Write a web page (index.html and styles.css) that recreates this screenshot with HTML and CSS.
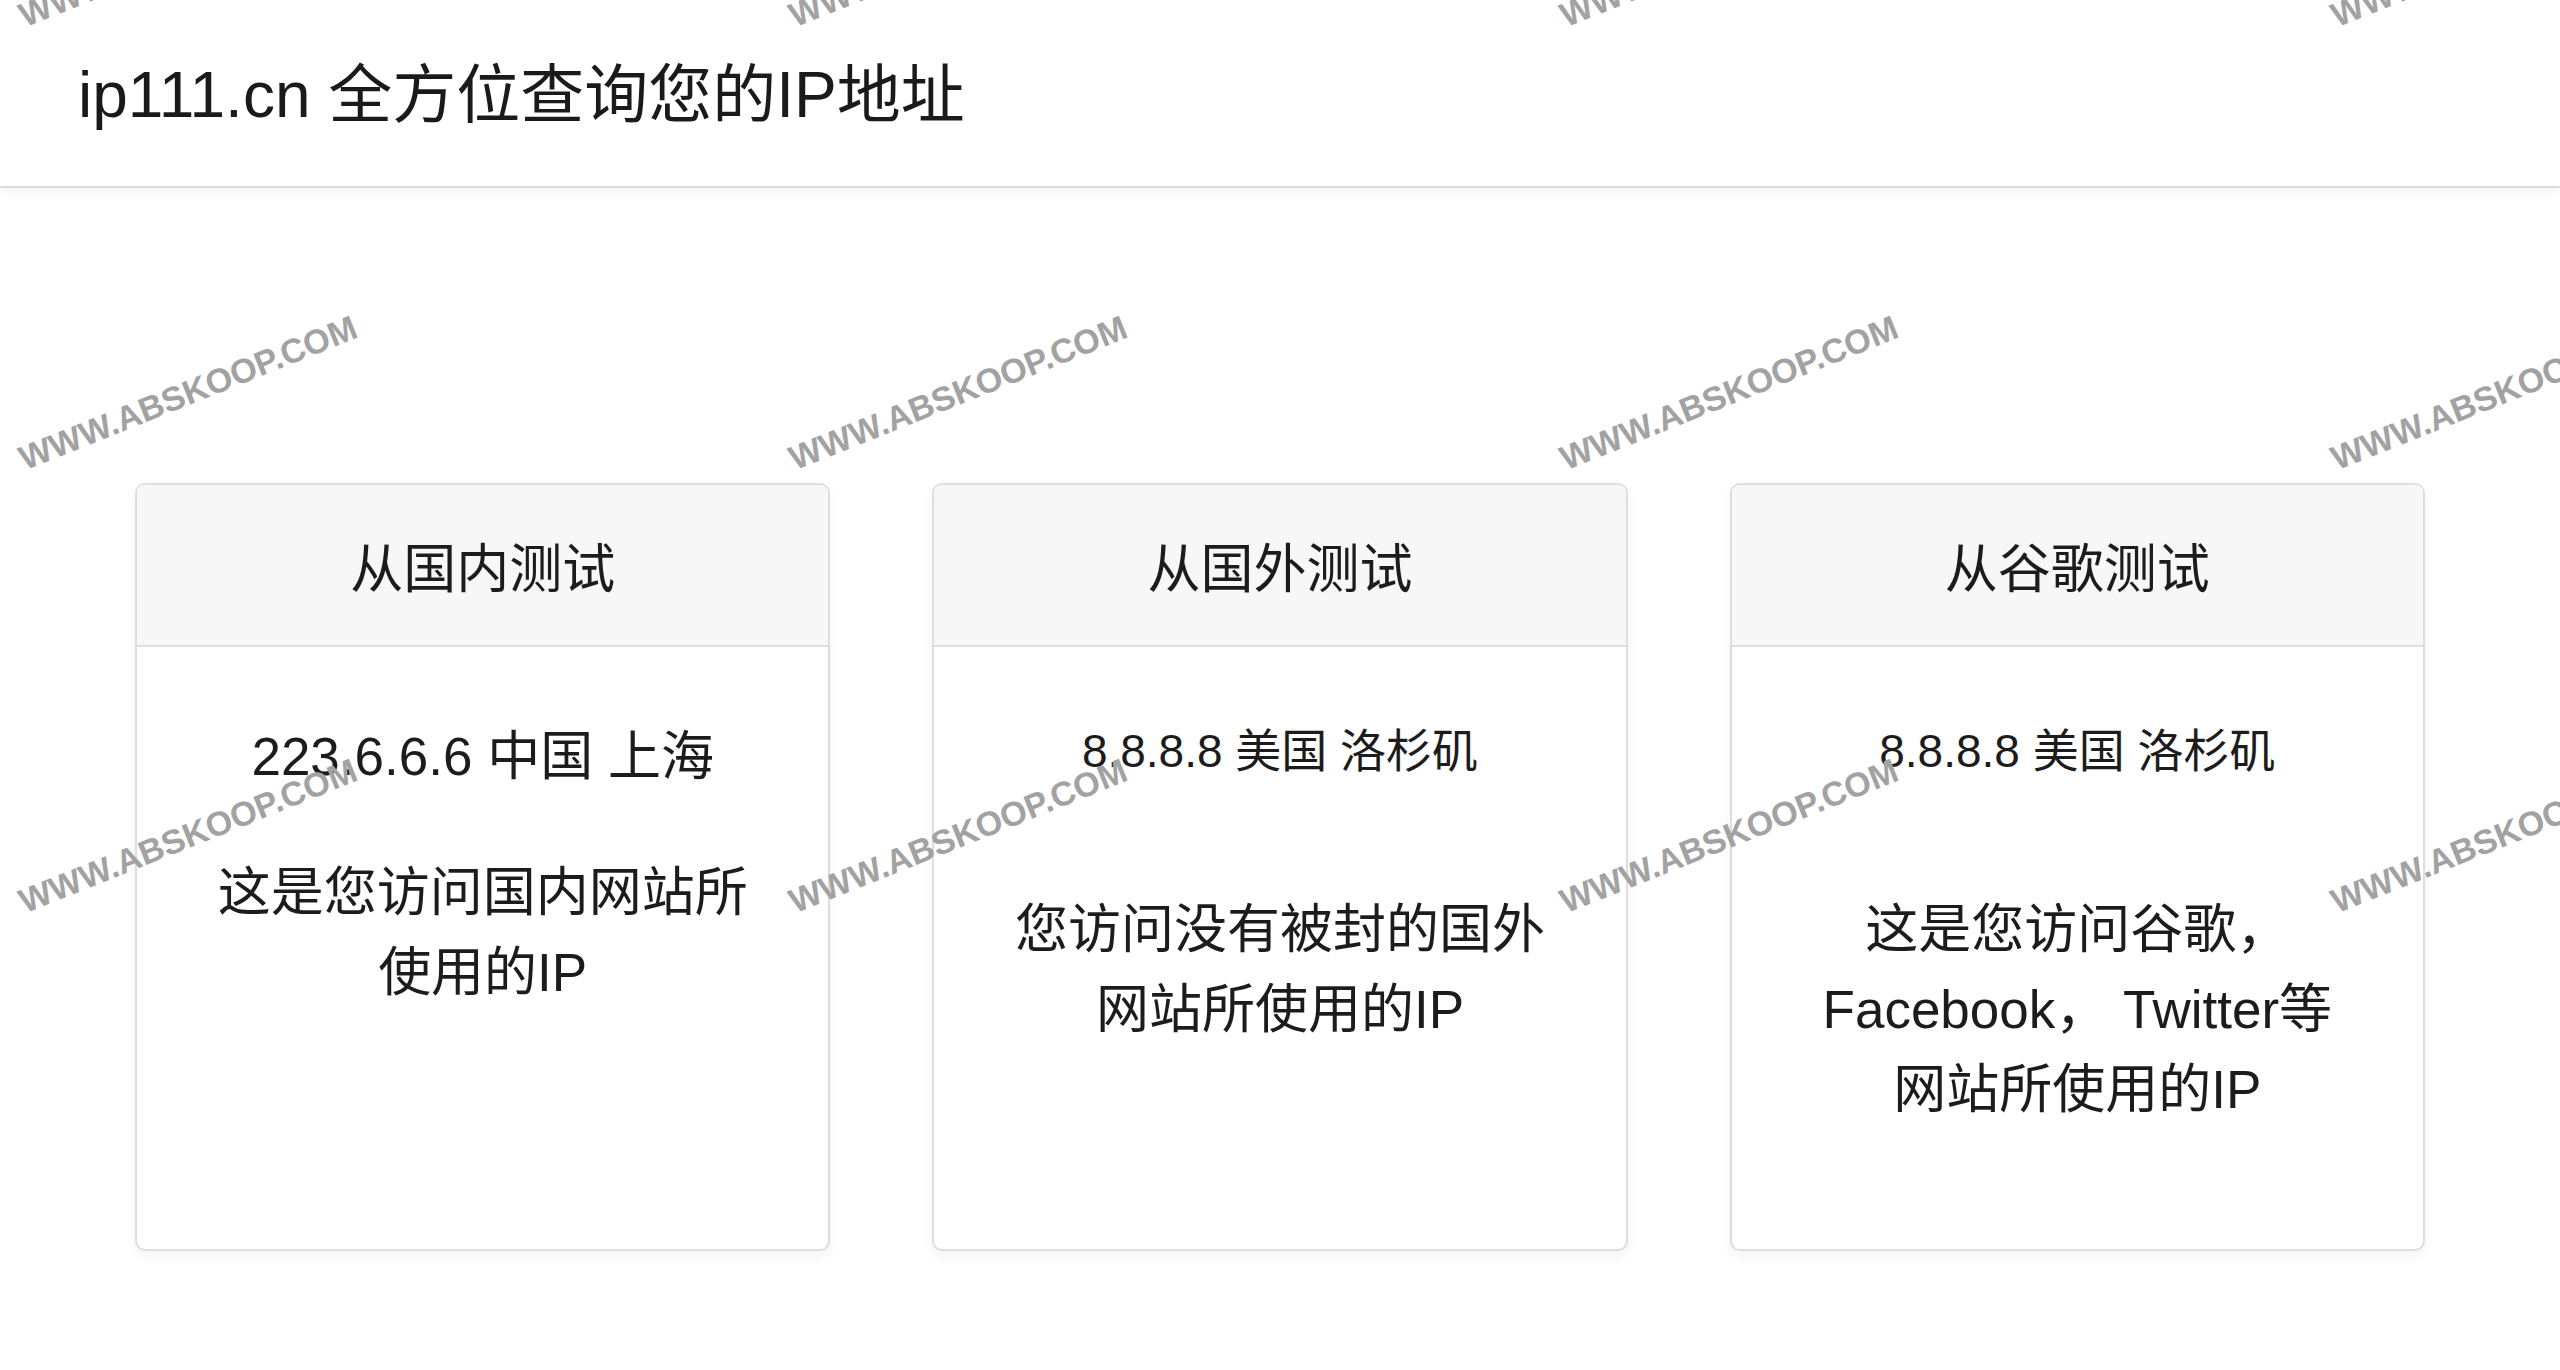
FILE: index.html
```html
<!DOCTYPE html>
<html lang="zh-CN">
<head>
<meta charset="utf-8">
<title>ip111.cn 全方位查询您的IP地址</title>
<link rel="stylesheet" href="styles.css">
</head>
<body>
<header class="topbar">
  <h1 class="site-title">ip111.cn 全方位查询您的IP地址</h1>
</header>
<main class="cards">
  <section class="card">
    <div class="card-header">从国内测试</div>
    <div class="card-body">
      <p class="ip">223.6.6.6 中国 上海</p>
      <p class="desc">这是您访问国内网站所<br>使用的IP</p>
    </div>
  </section>
  <section class="card">
    <div class="card-header">从国外测试</div>
    <div class="card-body">
      <p class="ip ip-small">8.8.8.8 美国 洛杉矶</p>
      <p class="desc desc-far">您访问没有被封的国外<br>网站所使用的IP</p>
    </div>
  </section>
  <section class="card">
    <div class="card-header">从谷歌测试</div>
    <div class="card-body">
      <p class="ip ip-small">8.8.8.8 美国 洛杉矶</p>
      <p class="desc desc-far">这是您访问谷歌，<br>Facebook，&nbsp;Twitter等<br>网站所使用的IP</p>
    </div>
  </section>
</main>
<div class="watermarks" aria-hidden="true">
  <span class="wm" style="left:188px;top:-50px">WWW.ABSKOOP.COM</span>
  <span class="wm" style="left:958px;top:-50px">WWW.ABSKOOP.COM</span>
  <span class="wm" style="left:1729px;top:-50px">WWW.ABSKOOP.COM</span>
  <span class="wm" style="left:2500px;top:-50px">WWW.ABSKOOP.COM</span>
  <span class="wm" style="left:188px;top:393px">WWW.ABSKOOP.COM</span>
  <span class="wm" style="left:958px;top:393px">WWW.ABSKOOP.COM</span>
  <span class="wm" style="left:1729px;top:393px">WWW.ABSKOOP.COM</span>
  <span class="wm" style="left:2500px;top:393px">WWW.ABSKOOP.COM</span>
  <span class="wm" style="left:188px;top:836px">WWW.ABSKOOP.COM</span>
  <span class="wm" style="left:958px;top:836px">WWW.ABSKOOP.COM</span>
  <span class="wm" style="left:1729px;top:836px">WWW.ABSKOOP.COM</span>
  <span class="wm" style="left:2500px;top:836px">WWW.ABSKOOP.COM</span>
</div>
</body>
</html>
```
FILE: styles.css
```css
html, body {
  margin: 0;
  padding: 0;
  width: 2560px;
  height: 1370px;
  overflow: hidden;
  background: #ffffff;
}

body {
  position: relative;
  font-family: "Liberation Sans", "Noto Sans CJK SC", sans-serif;
  color: #1c1c1c;
}

.topbar {
  height: 188px;
  box-sizing: border-box;
  display: flex;
  align-items: center;
  padding-left: 78px;
  padding-top: 4px;
  background: #ffffff;
  border-bottom: 2px solid #dadada;
  box-shadow: 0 3px 12px rgba(0, 0, 0, 0.06);
  position: relative;
  z-index: 1;
}

.site-title {
  margin: 0;
  font-size: 64px;
  font-weight: normal;
  line-height: 1;
  color: #1a1a1a;
}

.cards {
  display: flex;
  gap: 102px;
  padding: 295px 135px 0;
}

.card {
  flex: 1 1 0;
  height: 768px;
  box-sizing: border-box;
  border: 2px solid #dedede;
  border-radius: 10px;
  background: #ffffff;
  overflow: hidden;
  display: flex;
  flex-direction: column;
  box-shadow: 0 6px 14px rgba(0, 0, 0, 0.05);
}

.card-header {
  height: 162px;
  box-sizing: border-box;
  display: flex;
  align-items: center;
  justify-content: center;
  background: #f7f7f7;
  border-bottom: 2px solid #dedede;
  font-size: 53px;
  color: #1c1c1c;
}

.card-body {
  flex: 1;
  padding: 70px 20px 0;
  text-align: center;
}

.ip {
  margin: 0;
  font-size: 53px;
  line-height: 80px;
}

.ip-small {
  font-size: 46px;
  line-height: 69px;
}

.desc {
  margin: 56px 0 0;
  font-size: 53px;
  line-height: 80px;
}

.desc-far {
  margin-top: 104px;
}

.watermarks {
  position: absolute;
  inset: 0;
  pointer-events: none;
  z-index: 5;
}

.wm {
  position: absolute;
  transform: translate(-50%, -50%) rotate(-21.8deg);
  white-space: nowrap;
  font-family: "Liberation Sans", sans-serif;
  font-weight: bold;
  font-size: 34px;
  color: #a2a2a2;
}
```
